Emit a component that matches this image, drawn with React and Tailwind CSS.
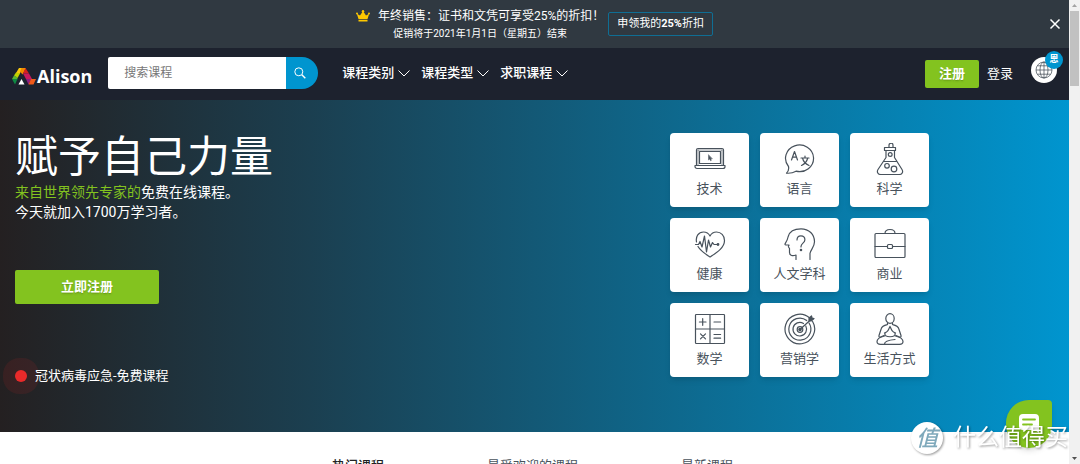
import React, { useState } from "react";
import clsx from "clsx";

const menuItems = ["课程类别", "课程类型", "求职课程"];

const tabs = [
  { label: "热门课程", active: true },
  { label: "最受欢迎的课程" },
  { label: "最新课程" },
];

function Icon({ children }) {
  return (
    <svg
      viewBox="0 0 32 32"
      className="w-8 h-8"
      fill="none"
      stroke="currentColor"
      strokeWidth="1.2"
      strokeLinecap="round"
      strokeLinejoin="round"
      aria-hidden="true"
    >
      {children}
    </svg>
  );
}

const categories = [
  {
    label: "技术",
    icon: (
      <Icon>
        <path d="M2.5 22.5V7A1.5 1.5 0 0 1 4 5.500h24A1.5 1.5 0 0 1 29.500 7v15.500" />
        <path d="M5.500 8.500h21v12h-21zM1 22.500h30v1a2 2 0 0 1-2 2H3a2 2 0 0 1-2-2z" />
        <path d="M4 7h24M4 7v15M28 7v15" strokeWidth="0.6" />
        <path d="M14.500 12v5l1.200-1 .9 1.800.8-.5-.8-1.600h1.400z" fill="currentColor" strokeWidth="0.5" />
      </Icon>
    ),
  },
  {
    label: "语言",
    icon: (
      <Icon>
        <path d="M4.500 23.500A14 13.300 0 1 1 12 28.200c-2.500 1.500-5.500 2.300-9.500 2 1.800-1.800 2.600-4 2-6.700z" />
        <path d="M7.500 17l3-8.500 3 8.500M8.500 14.200h4" />
        <path d="M17 15h8M21 13v2M23.700 15c-.8 3.500-3 6-6.200 7.500M18.500 15c.8 3.500 3 6 6.500 7.500" />
      </Icon>
    ),
  },
  {
    label: "科学",
    icon: (
      <Icon>
        <path d="M10.500 4.500h11v3h-11zM12 7.500v7L4 26.500c-1.500 2.500 0 5 2.800 5h18.400c2.800 0 4.300-2.500 2.800-5l-7.500-12v-7" />
        <path d="M15 4.500V2.200a2 2 0 0 1 4 0v2.300M9.500 18.500h13" />
        <circle cx="16.2" cy="11.500" r="1.9" />
        <circle cx="13" cy="22.800" r="2.3" />
        <circle cx="20" cy="26" r="2.8" />
      </Icon>
    ),
  },
  {
    label: "健康",
    icon: (
      <Icon>
        <path d="M2.500 14C1.500 8.500 4.500 4 9.500 4c3 0 5.200 1.500 6.500 4 1.300-2.500 3.500-4 6.500-4 4.500 0 8 3.500 8 8.500 0 7-7 11.500-14.500 16.500C10.500 25.500 6 22 4 18.500" />
        <path d="M1.500 16.500h3l1.500-3 2 5.500 2.500-11 2 16 2-12 2 7 2-4.500 1.500 2H24" />
        <circle cx="24" cy="16.500" r="0.8" fill="currentColor" />
      </Icon>
    ),
  },
  {
    label: "人文学科",
    icon: (
      <Icon>
        <path d="M12 31.500V27c-3 1.200-6.500 1-6.500-2.500v-4l-1-1.500c-.3-.8.500-1.300.5-2H1.800c-.8 0-1-.7-.6-1.400C3 12.500 3.800 11 4.200 8.500 5.500 3.500 10.500.8 17 .8c8 0 13.500 5.500 13.500 13 0 5-3.500 7.500-4.500 11.500v6.200" />
        <path d="M13 12c0-2.500 1.500-4.200 3.900-4.200s4 1.600 4 4c0 3.200-3.900 3.500-3.900 6.700v.5" />
        <circle cx="17" cy="22" r="0.7" fill="currentColor" />
      </Icon>
    ),
  },
  {
    label: "商业",
    icon: (
      <Icon>
        <rect x="1" y="5.500" width="30" height="24" rx="1" />
        <path d="M11 5.500c0-2.500 1.700-4 5-4s5 1.500 5 4M1 18.500h12.500M18.500 18.500H31" />
        <rect x="13.500" y="16.500" width="5" height="4" rx="1" />
      </Icon>
    ),
  },
  {
    label: "数学",
    icon: (
      <Icon>
        <rect x="1.500" y="1.500" width="29" height="29" rx="0.8" />
        <path d="M16 1.500v29M1.500 16h29M8.700 5.700v6.600M5.400 9h6.600M20 9h6.600M6.500 20.800l5 5M11.500 20.800l-5 5M20 21.500h6.600M20 25.200h6.600" />
      </Icon>
    ),
  },
  {
    label: "营销学",
    icon: (
      <Icon>
        <path d="M25.500 4.800A14.800 14.800 0 1 0 28.600 8.500" />
        <path d="M22.700 7.500A11 11 0 1 0 25 10" />
        <path d="M19.500 10.500A6.800 6.800 0 1 0 21.800 13" />
        <circle cx="16" cy="16.500" r="2.800" />
        <circle cx="16" cy="16.500" r="1.200" fill="currentColor" />
        <path d="M16 16.500L28 5.500" />
        <path d="M25 7.800V5.300l2.500-2.300.5 2 2 .5-2.500 2.300z" fill="currentColor" />
      </Icon>
    ),
  },
  {
    label: "生活方式",
    icon: (
      <Icon>
        <ellipse cx="16" cy="5.500" rx="4.200" ry="4.800" />
        <path d="M13.500 10v1.500c-3.500 1-5.500 1.500-6.200 4L5 22.500c-.4 1.500.5 2 1.500 1.500l3.500-1.500M18.500 10v1.500c3.500 1 5.500 1.500 6.200 4L27 22.500c.4 1.500-.5 2-1.500 1.500L22 22.500" />
        <path d="M16 13.500c-1.500 2.500-1 4-3.500 5.500l-2 1M16 13.500c1.500 2.500 1 4 3.500 5.500l2 1M11 20v2.500c3 1.500 7 1.500 10 0V20" />
        <path d="M10.500 23c-4 1-7.500 2.500-7.500 5.500 0 2 1.500 2.800 3.500 2.800h19c2 0 3.500-.8 3.500-2.800 0-3-3.500-4.500-7.500-5.500M10.500 31c0-2.500 4.500-4 10.500-4.500" />
      </Icon>
    ),
  },
];

function Logo() {
  return (
    <a href="#" className="flex items-center gap-px pt-1 text-white" aria-label="Alison">
      <svg viewBox="0 0 24 17" className="w-6 h-[17px]" aria-hidden="true">
        <path d="M7 0h4L7.500 6 4 5z" fill="#f9c80e" />
        <path d="M4 4.500l4 1-2.500 4.500-3.500-2.500z" fill="#c4d200" />
        <path d="M2 7.500l3.800 2L5 11.500 0 11z" fill="#5cb531" />
        <path d="M0 11h5.500L3 16.500z" fill="#0f8a43" />
        <path d="M9.500 0H14l-3.500 6.500-2.500-3z" fill="#f08a00" />
        <path d="M13.500 0l3.500 5.500h-6z" fill="#d6201f" />
        <path d="M11 5.500h6l3 5.500h-6z" fill="#c8195f" />
        <path d="M14 11h5.500l-3 5.500z" fill="#8f1d82" />
        <path d="M19 11h5l-2.500 5.500h-5z" fill="#ef5a1a" />
        <path d="M9.500 11l3 5.500h-6z" fill="#fff" />
      </svg>
      <span className="font-['Open_Sans',sans-serif] text-lg leading-6 font-bold">Alison</span>
    </a>
  );
}

function Chevron() {
  return (
    <svg viewBox="0 0 12 8" className="w-3 h-2" fill="none" stroke="currentColor" aria-hidden="true">
      <path d="M.5 1.500L6 7l5.500-5.500" />
    </svg>
  );
}

function PromoBar({ onClose }) {
  return (
    <div className="flex items-center h-12 pr-1 bg-[#303941] text-white">
      <div className="flex items-center justify-center flex-1 gap-1 pl-6">
        <div className="text-center">
          <p className="flex items-center justify-center gap-2 text-xs leading-5">
            <svg viewBox="0 0 14 12" className="w-3.5 h-3" fill="#fdc800" aria-hidden="true">
              <path d="M2.500 9L.8 3.800 4 5.500 7 1l3 4.500 3.200-1.700L11.500 9zM2.500 9.800h9v1.700h-9z" />
              <circle cx="1" cy="3.500" r="1" />
              <circle cx="7" cy="1.200" r="1.200" />
              <circle cx="13" cy="3.500" r="1" />
            </svg>
            年终销售：证书和文凭可享受25%的折扣！
          </p>
          <p className="text-[10px] leading-4">促销将于2021年1月1日（星期五）结束</p>
        </div>
        <button type="button" className="h-6 px-2 text-[11px] border rounded-xs border-[#0f6e94]">
          申领我的<b className="font-bold">25%</b>折扣
        </button>
      </div>
      <button type="button" onClick={onClose} aria-label="关闭" className="p-1">
        <svg viewBox="0 0 12 12" className="w-3 h-3" stroke="currentColor" strokeWidth="1.5" aria-hidden="true">
          <path d="M1.500 1.500l9 9M10.500 1.500l-9 9" />
        </svg>
      </button>
    </div>
  );
}

function Header() {
  return (
    <header className="flex items-center h-[52px] px-3 bg-[#1d222e] text-white">
      <Logo />
      <form className="flex h-8 ml-4 mb-0.5" onSubmit={(e) => e.preventDefault()}>
        <input
          type="search"
          aria-label="搜索课程"
          placeholder="搜索课程"
          className="w-[178px] px-4 text-xs text-gray-700 bg-white outline-none rounded-l-xs placeholder:text-[#777]"
        />
        <button type="submit" aria-label="搜索" className="flex items-center w-8 pl-2 bg-[#0095cf] rounded-r-full">
          <svg viewBox="0 0 12 12" className="w-3 h-3" fill="none" stroke="currentColor" aria-hidden="true">
            <circle cx="4.800" cy="4.800" r="4" />
            <path d="M7.800 7.800l3.500 3.500" strokeWidth="1.400" />
          </svg>
        </button>
      </form>
      <nav className="flex gap-[11px] ml-6 mb-0.5">
        {menuItems.map((item) => (
          <button key={item} type="button" className="flex items-center gap-1 text-[13px] font-medium">
            {item}
            <Chevron />
          </button>
        ))}
      </nav>
      <div className="flex items-center ml-auto">
        <a
          href="#"
          className="px-3.5 text-[13px] leading-7 font-bold rounded-xs bg-[#83c31f] text-shadow-sm"
        >
          注册
        </a>
        <a href="#" className="ml-2 text-[13px]">
          登录
        </a>
        <button type="button" aria-label="语言" className="relative ml-[18px] mb-2 p-1 bg-white rounded-full text-[#3c4650]">
          <svg viewBox="0 0 18 18" className="w-[18px] h-[18px]" fill="none" stroke="currentColor" strokeWidth="0.7" aria-hidden="true">
            <circle cx="9" cy="9" r="8" />
            <ellipse cx="9" cy="9" rx="4" ry="8" />
            <path d="M9 1v16M1 9h16M2.500 4.800h13M2.500 13.200h13" />
          </svg>
          <span className="absolute flex items-center justify-center w-[18px] h-[18px] text-[9px] font-bold text-white rounded-full -top-1.5 -right-1.5 bg-[#0095cf]">
            恩
          </span>
        </button>
      </div>
    </header>
  );
}

function Hero() {
  return (
    <section className="flex items-start justify-between pl-[15px] pr-[140px] pt-8 pb-[46px] text-white bg-linear-to-r/srgb from-[#242021] via-[#1b3f50] via-29% to-[#0095cf]">
      <div className="flex flex-col items-start">
        <h1 className="text-[43px] leading-[50px] font-normal">赋予自己力量</h1>
        <p className="text-[14px] leading-5">
          <span className="text-[#83c31f]">来自世界领先专家的</span>免费在线课程。
          <br />
          今天就加入1700万学习者。
        </p>
        <a
          href="#"
          className="mt-12 w-36 text-[13px] leading-[34px] font-bold text-center rounded-xs bg-[#83c31f] text-shadow-sm"
        >
          立即注册
        </a>
        <a href="#" className="flex items-center gap-2 mt-[62px] text-[13px] leading-5">
          <span className="w-3 h-3 bg-[#e92a2a] rounded-full ring-12 ring-[#e92a2a]/10" />
          冠状病毒应急-免费课程
        </a>
      </div>
      <div className="grid grid-cols-3 gap-[11px] pt-px">
        {categories.map(({ label, icon }) => (
          <a
            key={label}
            href="#"
            className="flex flex-col items-center w-[79px] h-[74px] pt-2.5 bg-white rounded shadow-md text-[#48525c]"
          >
            {icon}
            <span className="mt-1 text-[13px] leading-5">{label}</span>
          </a>
        ))}
      </div>
    </section>
  );
}

function Scrollbar() {
  return (
    <div className="flex flex-col items-center justify-between w-[11px] bg-[#f1f1f1]" aria-hidden="true">
      <div className="flex flex-col items-center w-full">
        <svg viewBox="0 0 11 11" className="w-[11px] h-[11px]" fill="#a3a3a3">
          <path d="M3 7h5L5.500 4z" />
        </svg>
        <div className="w-[9px] h-[75px] bg-[#c1c1c1]" />
      </div>
      <svg viewBox="0 0 11 11" className="w-[11px] h-[11px]" fill="#505050">
        <path d="M3 4h5L5.500 7z" />
      </svg>
    </div>
  );
}

export default function App() {
  const [showPromo, setShowPromo] = useState(true);

  return (
    <div className="relative flex h-screen overflow-hidden bg-white font-[Roboto,'Noto_Sans_CJK_SC',sans-serif]">
      <main className="flex-1 overflow-hidden">
        {showPromo && <PromoBar onClose={() => setShowPromo(false)} />}
        <Header />
        <Hero />
        <div className="flex justify-center gap-[103px] pt-6 pr-1 text-[13px] leading-5 text-[#48525c]">
          {tabs.map(({ label, active }) => (
            <button key={label} type="button" className={clsx(active && "font-medium text-[#222]")}>
              {label}
            </button>
          ))}
        </div>
      </main>
      <Scrollbar />
      <button
        type="button"
        aria-label="聊天"
        className="absolute flex items-center justify-center bg-[#83c31f] shadow-md w-[46px] h-12 right-7 bottom-4 rounded-[23px] rounded-tr-sm"
      >
        <svg viewBox="0 0 20 20" className="w-5 h-5" aria-hidden="true">
          <path d="M4 0h12a4 4 0 0 1 4 4v15l-4-3H4a4 4 0 0 1-4-4V4a4 4 0 0 1 4-4z" fill="#fff" />
          <path d="M4 5.500h12M4 10.500h9" stroke="#83c31f" strokeWidth="1.800" strokeLinecap="round" />
        </svg>
      </button>
      <div className="absolute flex items-center gap-2.5 text-white pointer-events-none right-3 bottom-2.5 drop-shadow-[1px_1px_1px_rgba(0,0,0,0.4)]">
        <span className="flex items-center justify-center w-8 h-8 text-[22px] italic font-medium bg-white rounded-full text-[#7fa9bb]">
          值
        </span>
        <span className="text-[23px] leading-8">什么值得买</span>
      </div>
    </div>
  );
}
